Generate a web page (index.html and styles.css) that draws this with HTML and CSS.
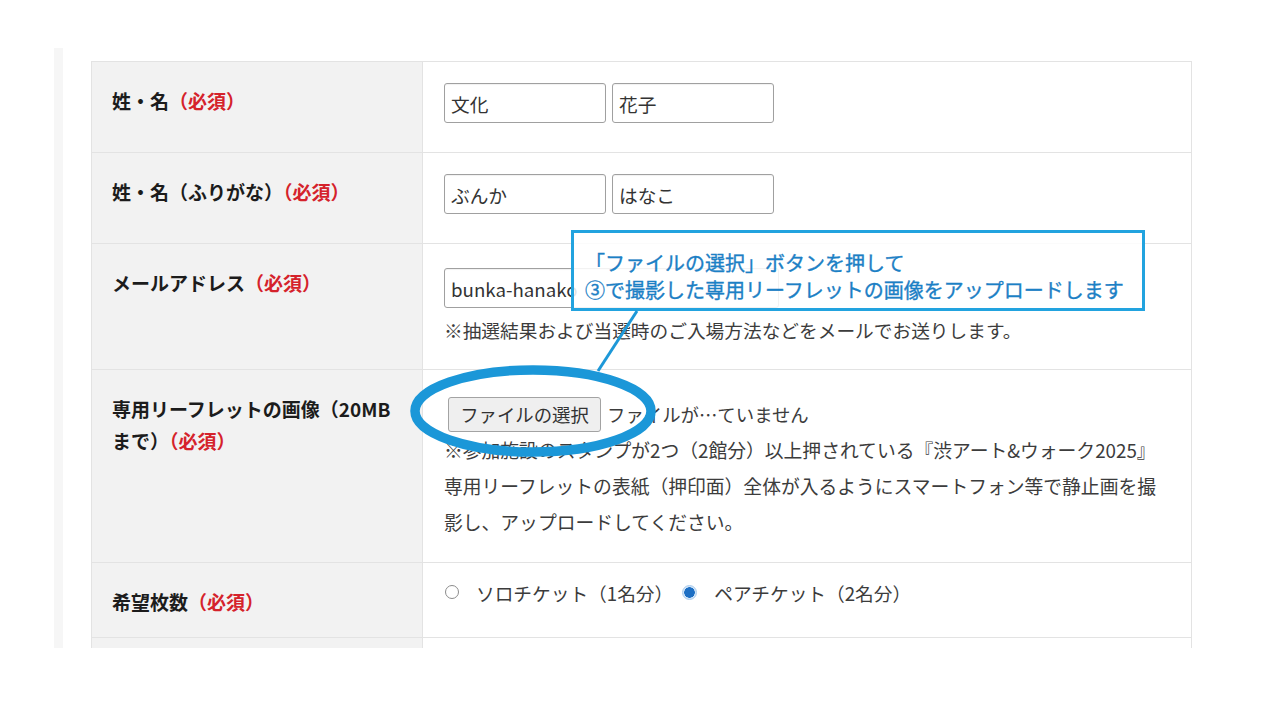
FILE: index.html
```html
<!DOCTYPE html>
<html lang="ja">
<head>
<meta charset="utf-8">
<title>応募フォーム</title>
<link rel="stylesheet" href="styles.css">
</head>
<body>
<div class="page">
  <div class="frame">
    <div class="strip"></div>
    <div class="content">
      <div class="form">
        <div class="row r-name">
          <div class="lbl">姓・名<span class="req">（必須）</span></div>
          <div class="val">
            <div class="pair">
              <input class="txt short" type="text" value="文化">
              <input class="txt short" type="text" value="花子">
            </div>
          </div>
        </div>
        <div class="row r-name">
          <div class="lbl">姓・名（ふりがな）<span class="req">（必須）</span></div>
          <div class="val">
            <div class="pair">
              <input class="txt short" type="text" value="ぶんか">
              <input class="txt short" type="text" value="はなこ">
            </div>
          </div>
        </div>
        <div class="row r-mail">
          <div class="lbl">メールアドレス<span class="req">（必須）</span></div>
          <div class="val">
            <input class="txt long" type="text" value="bunka-hanako">
            <p class="note first">※抽選結果および当選時のご入場方法などをメールでお送りします。</p>
          </div>
        </div>
        <div class="row r-file">
          <div class="lbl">専用リーフレットの画像（20MB<br>まで）<span class="req">（必須）</span></div>
          <div class="val">
            <div class="fileline">
              <button class="filebtn" type="button">ファイルの選択</button>
              <span class="filename">ファイルが…ていません</span>
            </div>
            <p class="note">※参加施設のスタンプが2つ（2館分）以上押されている『渋アート&amp;ウォーク2025』<br>専用リーフレットの表紙（押印面）全体が入るようにスマートフォン等で静止画を撮<br>影し、アップロードしてください。</p>
          </div>
        </div>
        <div class="row r-qty">
          <div class="lbl">希望枚数<span class="req">（必須）</span></div>
          <div class="val">
            <div class="radios">
              <span class="radio"></span><span class="rlabel">ソロチケット（1名分）</span>
              <span class="radio on"></span><span class="rlabel">ペアチケット（2名分）</span>
            </div>
          </div>
        </div>
        <div class="row r-next">
          <div class="lbl"></div>
          <div class="val"></div>
        </div>
      </div>
    </div>
  </div>

  <div class="callout">
    <p>「ファイルの選択」ボタンを押して<br>③で撮影した専用リーフレットの画像をアップロードします</p>
  </div>
  <svg class="marks" width="1280" height="705" viewBox="0 0 1280 705" aria-hidden="true">
    <line x1="637" y1="311" x2="598" y2="371" stroke="#1d98d8" stroke-width="3"/>
    <ellipse cx="533" cy="411" rx="118" ry="41" fill="none" stroke="#1b97d8" stroke-width="9.5"/>
  </svg>
</div>
</body>
</html>
```

FILE: styles.css
```css
html, body {
  margin: 0;
  padding: 0;
  background: #ffffff;
}

body {
  font-family: "Noto Sans CJK JP", "Noto Sans", sans-serif;
  color: #3a3a3a;
}

.page {
  position: relative;
  width: 1280px;
  height: 705px;
  padding: 48px 0 0 54px;
  box-sizing: border-box;
  overflow: hidden;
}

.frame {
  display: flex;
  height: 600px;
  overflow: hidden;
}

.strip {
  width: 9px;
  flex: none;
  background: #f6f6f6;
}

.content {
  padding: 13px 0 0 28px;
}

.form {
  width: 1101px;
  box-sizing: border-box;
  border-top: 1px solid #e3e3e3;
  border-left: 1px solid #e3e3e3;
  border-right: 1px solid #e3e3e3;
}

.row {
  display: grid;
  grid-template-columns: 331px 1fr;
  border-bottom: 1px solid #e3e3e3;
}

.lbl {
  background: #f2f2f2;
  border-right: 1px solid #e3e3e3;
  padding: 23px 20px 0 20px;
  font-size: 19px;
  line-height: 32px;
  font-weight: 700;
  color: #1c1c1c;
}

.req {
  color: #d5222b;
}

.val {
  padding: 0 0 0 21px;
  font-size: 18.7px;
  color: #3c3c3c;
}

.r-name .val {
  padding-top: 21px;
  padding-bottom: 29px;
}

.r-mail .val {
  padding-top: 24px;
  padding-bottom: 21px;
}

.r-file .val {
  padding-top: 26px;
  padding-bottom: 22px;
}

.r-qty .val {
  padding-top: 11px;
  padding-bottom: 27px;
}

.r-next .val {
  height: 60px;
}

.pair {
  display: flex;
  gap: 6px;
}

.txt {
  box-sizing: border-box;
  height: 40px;
  margin: 0;
  padding: 0 6px;
  border: 1px solid #a0a0a0;
  border-radius: 3px;
  background: #ffffff;
  font-family: "Noto Sans CJK JP", "Noto Sans", sans-serif;
  font-size: 18.7px;
  color: #333333;
  box-shadow: inset 0 1px 1px rgba(0, 0, 0, 0.06);
}

.short {
  width: 162px;
}

.long {
  width: 335px;
  display: block;
}

.note {
  margin: 0;
  line-height: 36px;
  white-space: nowrap;
  font-size: 18.8px;
}

.note.first {
  margin-top: 4px;
  font-size: 18.7px;
}

.fileline {
  display: flex;
  align-items: center;
  height: 36px;
  gap: 6px;
}

.filebtn {
  box-sizing: border-box;
  width: 153px;
  height: 35px;
  margin: 0 0 0 4px;
  padding: 0;
  border: 1px solid #a3a3a3;
  border-radius: 3px;
  background: #efefef;
  font-family: "Noto Sans CJK JP", "Noto Sans", sans-serif;
  font-size: 18.4px;
  color: #333333;
}

.filename {
  font-size: 18.4px;
}

.radios {
  display: flex;
  align-items: center;
  height: 36px;
}

.radio {
  box-sizing: border-box;
  width: 14px;
  height: 14px;
  margin-left: 1px;
  margin-right: 17px;
  border: 1px solid #8c8c8c;
  border-radius: 50%;
  background: #ffffff;
  flex: none;
}

.radio.on {
  width: 15px;
  height: 15px;
  border-color: #a8cbee;
  background: radial-gradient(circle, #1d6fc4 0 5px, #d3e5f7 5.5px);
  margin-left: 9px;
  margin-right: 17px;
}

.rlabel {
  font-size: 18.7px;
}

.callout {
  position: absolute;
  left: 571px;
  top: 230px;
  width: 574px;
  height: 81px;
  box-sizing: border-box;
  border: 3px solid #22a3df;
  background: rgba(255, 255, 255, 0.86);
  padding: 16px 0 0 11px;
}

.callout p {
  margin: 0;
  font-size: 20px;
  line-height: 27px;
  font-weight: 400;
  -webkit-text-stroke: 0.35px #1c80c5;
  color: #1c80c5;
  white-space: nowrap;
}

.marks {
  position: absolute;
  left: 0;
  top: 0;
  pointer-events: none;
}
```
